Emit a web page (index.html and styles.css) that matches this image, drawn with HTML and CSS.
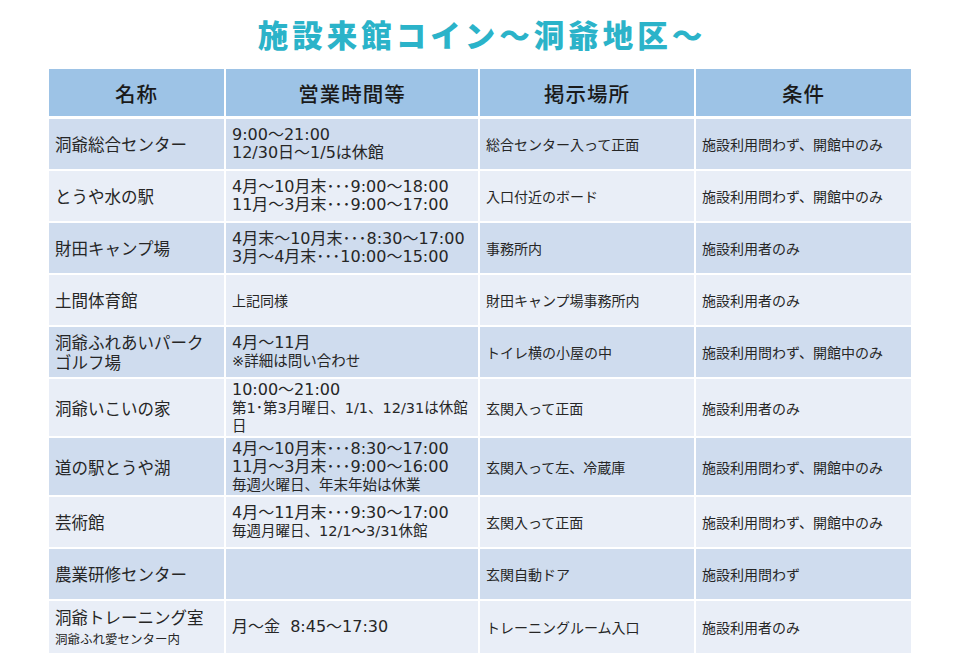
FILE: index.html
```html
<!DOCTYPE html>
<html lang="ja">
<head>
<meta charset="utf-8">
<link rel="stylesheet" href="styles.css">
</head>
<body>
<div class="page">
  <h1 class="title">施設来館コイン～洞爺地区～</h1>
  <table class="grid">
    <colgroup>
      <col class="c1"><col class="c2"><col class="c3"><col class="c4">
    </colgroup>
    <thead>
      <tr><th>名称</th><th>営業時間等</th><th>掲示場所</th><th>条件</th></tr>
    </thead>
    <tbody>
      <tr class="dark">
        <td class="name">洞爺総合センター</td>
        <td class="hours">9:00～21:00<br>12/30日～1/5は休館</td>
        <td class="small">総合センター入って正面</td>
        <td class="small">施設利用問わず、開館中のみ</td>
      </tr>
      <tr class="light">
        <td class="name">とうや水の駅</td>
        <td class="hours">4月～10月末･･･9:00～18:00<br>11月～3月末･･･9:00～17:00</td>
        <td class="small">入口付近のボード</td>
        <td class="small">施設利用問わず、開館中のみ</td>
      </tr>
      <tr class="dark">
        <td class="name">財田キャンプ場</td>
        <td class="hours">4月末～10月末･･･8:30～17:00<br>3月～4月末･･･10:00～15:00</td>
        <td class="small">事務所内</td>
        <td class="small">施設利用者のみ</td>
      </tr>
      <tr class="light">
        <td class="name">土間体育館</td>
        <td class="small">上記同様</td>
        <td class="small">財田キャンプ場事務所内</td>
        <td class="small">施設利用者のみ</td>
      </tr>
      <tr class="dark">
        <td class="name">洞爺ふれあいパーク<br>ゴルフ場</td>
        <td class="hours">4月～11月<br><span class="sm">※詳細は問い合わせ</span></td>
        <td class="small">トイレ横の小屋の中</td>
        <td class="small">施設利用問わず、開館中のみ</td>
      </tr>
      <tr class="light tall">
        <td class="name">洞爺いこいの家</td>
        <td class="hours">10:00～21:00<br><span class="sm">第1･第3月曜日、1/1、12/31は休館<br>日</span></td>
        <td class="small">玄関入って正面</td>
        <td class="small">施設利用者のみ</td>
      </tr>
      <tr class="dark tall">
        <td class="name">道の駅とうや湖</td>
        <td class="hours">4月～10月末･･･8:30～17:00<br>11月～3月末･･･9:00～16:00<br><span class="sm">毎週火曜日、年末年始は休業</span></td>
        <td class="small">玄関入って左、冷蔵庫</td>
        <td class="small">施設利用問わず、開館中のみ</td>
      </tr>
      <tr class="light">
        <td class="name">芸術館</td>
        <td class="hours">4月～11月末･･･9:30～17:00<br><span class="sm">毎週月曜日、12/1～3/31休館</span></td>
        <td class="small">玄関入って正面</td>
        <td class="small">施設利用問わず、開館中のみ</td>
      </tr>
      <tr class="dark">
        <td class="name">農業研修センター</td>
        <td class="hours"></td>
        <td class="small">玄関自動ドア</td>
        <td class="small">施設利用問わず</td>
      </tr>
      <tr class="light last">
        <td class="name">洞爺トレーニング室<br><span class="note">洞爺ふれ愛センター内</span></td>
        <td class="hours">月～金&nbsp;&nbsp;8:45～17:30</td>
        <td class="small">トレーニングルーム入口</td>
        <td class="small">施設利用者のみ</td>
      </tr>
    </tbody>
  </table>
</div>
</body>
</html>
```

FILE: styles.css
```css
html, body {
  margin: 0;
  padding: 0;
  background: #ffffff;
}

.page {
  width: 960px;
  height: 665px;
  padding: 0 49px;
  box-sizing: border-box;
  font-family: "Noto Sans CJK JP", "Noto Sans", sans-serif;
  color: #262626;
}

.title {
  margin: 0;
  height: 69px;
  display: flex;
  align-items: center;
  justify-content: center;
  font-family: "Noto Sans CJK JP", sans-serif;
  font-weight: 900;
  font-size: 30.5px;
  letter-spacing: 4px;
  color: #2bb3c9;
  padding: 0 0 2px 4px;
  box-sizing: border-box;
}

.grid {
  width: 862px;
  table-layout: fixed;
  border-collapse: separate;
  border-spacing: 0;
}

.c1 { width: 177px; }
.c2 { width: 254px; }
.c3 { width: 216px; }
.c4 { width: 215px; }

.grid th,
.grid td {
  box-sizing: border-box;
  border-right: 2px solid #ffffff;
  border-bottom: 2px solid #ffffff;
  vertical-align: middle;
  text-align: left;
  padding: 0 6px;
}

.grid th:last-child,
.grid td:last-child {
  border-right: 0;
}

.grid th {
  background: #9dc3e6;
  height: 50px;
  border-bottom-width: 3px;
  text-align: center;
  font-weight: 500;
  font-size: 20.5px;
  color: #1a1a1a;
  letter-spacing: 1px;
}

.grid td {
  height: 52px;
}

.grid tr.tall td {
  height: 59px;
}

.grid tr.last td {
  border-bottom: 0;
  height: 52px;
}

.dark td { background: #cfdcee; }
.light td { background: #e9eef7; }

.name {
  font-size: 16.5px;
  line-height: 20px;
}

.hours {
  font-family: "DejaVu Sans", "Noto Sans CJK JP", sans-serif;
  font-size: 16px;
  line-height: 18px;
  white-space: nowrap;
}

.small {
  font-size: 14px;
  line-height: 18px;
}

.sm {
  font-size: 14.5px;
}

.note {
  font-size: 12.5px;
  line-height: 15px;
  display: inline-block;
}
```
